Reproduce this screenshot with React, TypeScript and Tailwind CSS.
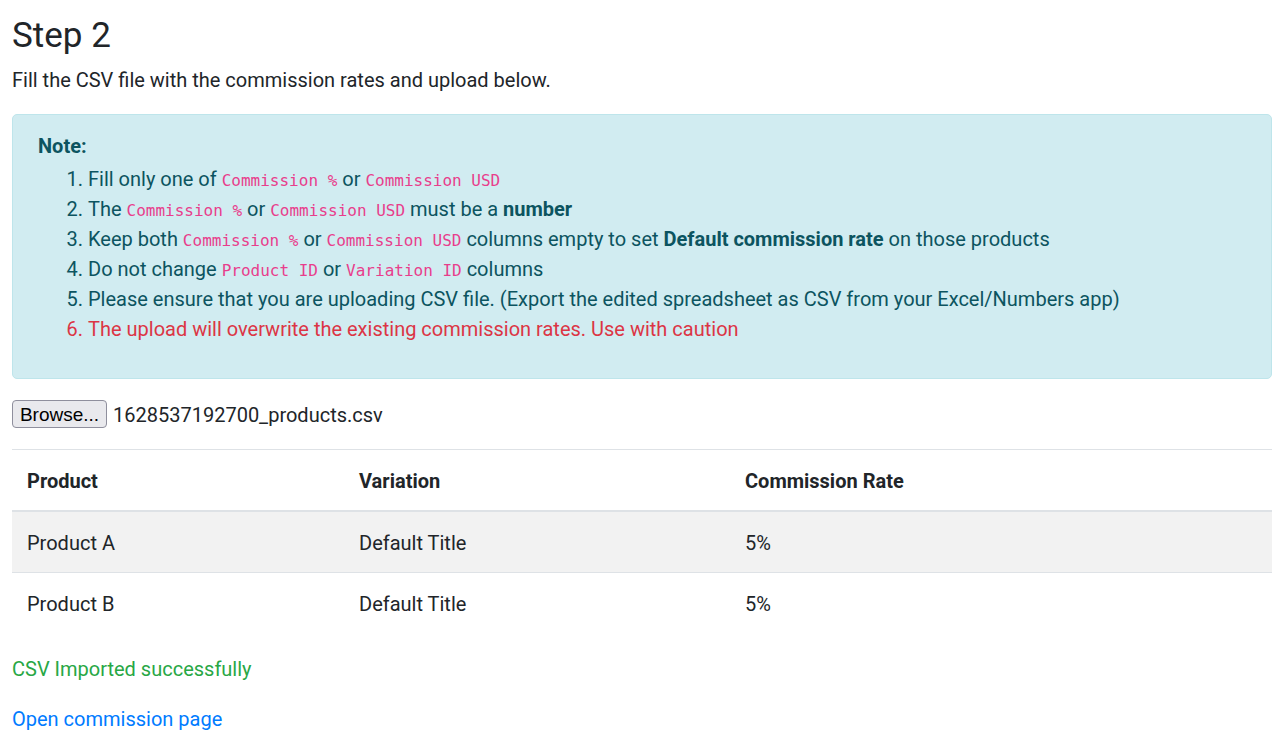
import React from "react";

const Code = ({ children }: { children: React.ReactNode }) => (
  <code className="font-['DejaVu_Sans_Mono',monospace] text-[16px] leading-none text-[#e83e8c] break-words">{children}</code>
);

const rows = [
  { product: "Product A", variation: "Default Title", rate: "5%" },
  { product: "Product B", variation: "Default Title", rate: "5%" },
];

export default function App() {
  return (
    <div className="min-h-[742px] bg-white pl-[12px] pr-[10px] pt-[15px] font-['Roboto',sans-serif] text-[20px] leading-[30px] text-[#212529]">
      <h3 className="mb-[8px] text-[35px] font-normal leading-[42px]">Step 2</h3>
      <p className="mb-[19px]">Fill the CSV file with the commission rates and upload below.</p>

      <div className="mb-[20px] rounded-[5px] border border-[#bee5eb] bg-[#d1ecf1] px-[25px] pb-[14px] pt-[16px] text-[#0c5460]">
        <div className="font-bold">Note:</div>
        <ol className="mb-[20px] mt-[3px] list-decimal pl-[50px]">
          <li>
            Fill only one of <Code>Commission %</Code> or <Code>Commission USD</Code>
          </li>
          <li>
            The <Code>Commission %</Code> or <Code>Commission USD</Code> must be a <b className="font-bold">number</b>
          </li>
          <li>
            Keep both <Code>Commission %</Code> or <Code>Commission USD</Code> columns empty to set{" "}
            <b className="font-bold">Default commission rate</b> on those products
          </li>
          <li>
            Do not change <Code>Product ID</Code> or <Code>Variation ID</Code> columns
          </li>
          <li>
            Please ensure that you are uploading CSV file. (Export the edited spreadsheet as CSV from your Excel/Numbers app)
          </li>
          <li className="text-[#dc3545]">The upload will overwrite the existing commission rates. Use with caution</li>
        </ol>
      </div>

      <div className="mb-[20px] flex h-[30px] items-center gap-[6px]">
        <button
          type="button"
          className="flex h-[28px] w-[95px] items-center justify-center rounded-[4px] border border-[#8f8f9d] bg-[#e9e9ed] font-['Liberation_Sans',Arial,sans-serif] text-[19px] leading-none text-black"
        >
          Browse...
        </button>
        <span className="pt-[2px]">1628537192700_products.csv</span>
      </div>

      <table className="mb-[20px] w-full border-collapse text-left">
        <thead>
          <tr>
            <th className="w-[332px] border-t border-b-2 border-[#dee2e6] px-[15px] pb-[14px] pt-[16px] font-bold">Product</th>
            <th className="w-[386px] border-t border-b-2 border-[#dee2e6] px-[15px] pb-[14px] pt-[16px] font-bold">Variation</th>
            <th className="border-t border-b-2 border-[#dee2e6] px-[15px] pb-[14px] pt-[16px] font-bold">Commission Rate</th>
          </tr>
        </thead>
        <tbody>
          {rows.map((r, i) => (
            <tr key={r.product} className={i % 2 === 0 ? "bg-[#f2f2f2]" : ""}>
              <td className="border-t border-[#dee2e6] px-[15px] pb-[14px] pt-[16px]">{r.product}</td>
              <td className="border-t border-[#dee2e6] px-[15px] pb-[14px] pt-[16px]">{r.variation}</td>
              <td className="border-t border-[#dee2e6] px-[15px] pb-[14px] pt-[16px]">{r.rate}</td>
            </tr>
          ))}
        </tbody>
      </table>

      <p className="mb-[20px] pt-[1px] text-[#28a745]">CSV Imported successfully</p>
      <a href="#" className="text-[#007bff]">Open commission page</a>
    </div>
  );
}
